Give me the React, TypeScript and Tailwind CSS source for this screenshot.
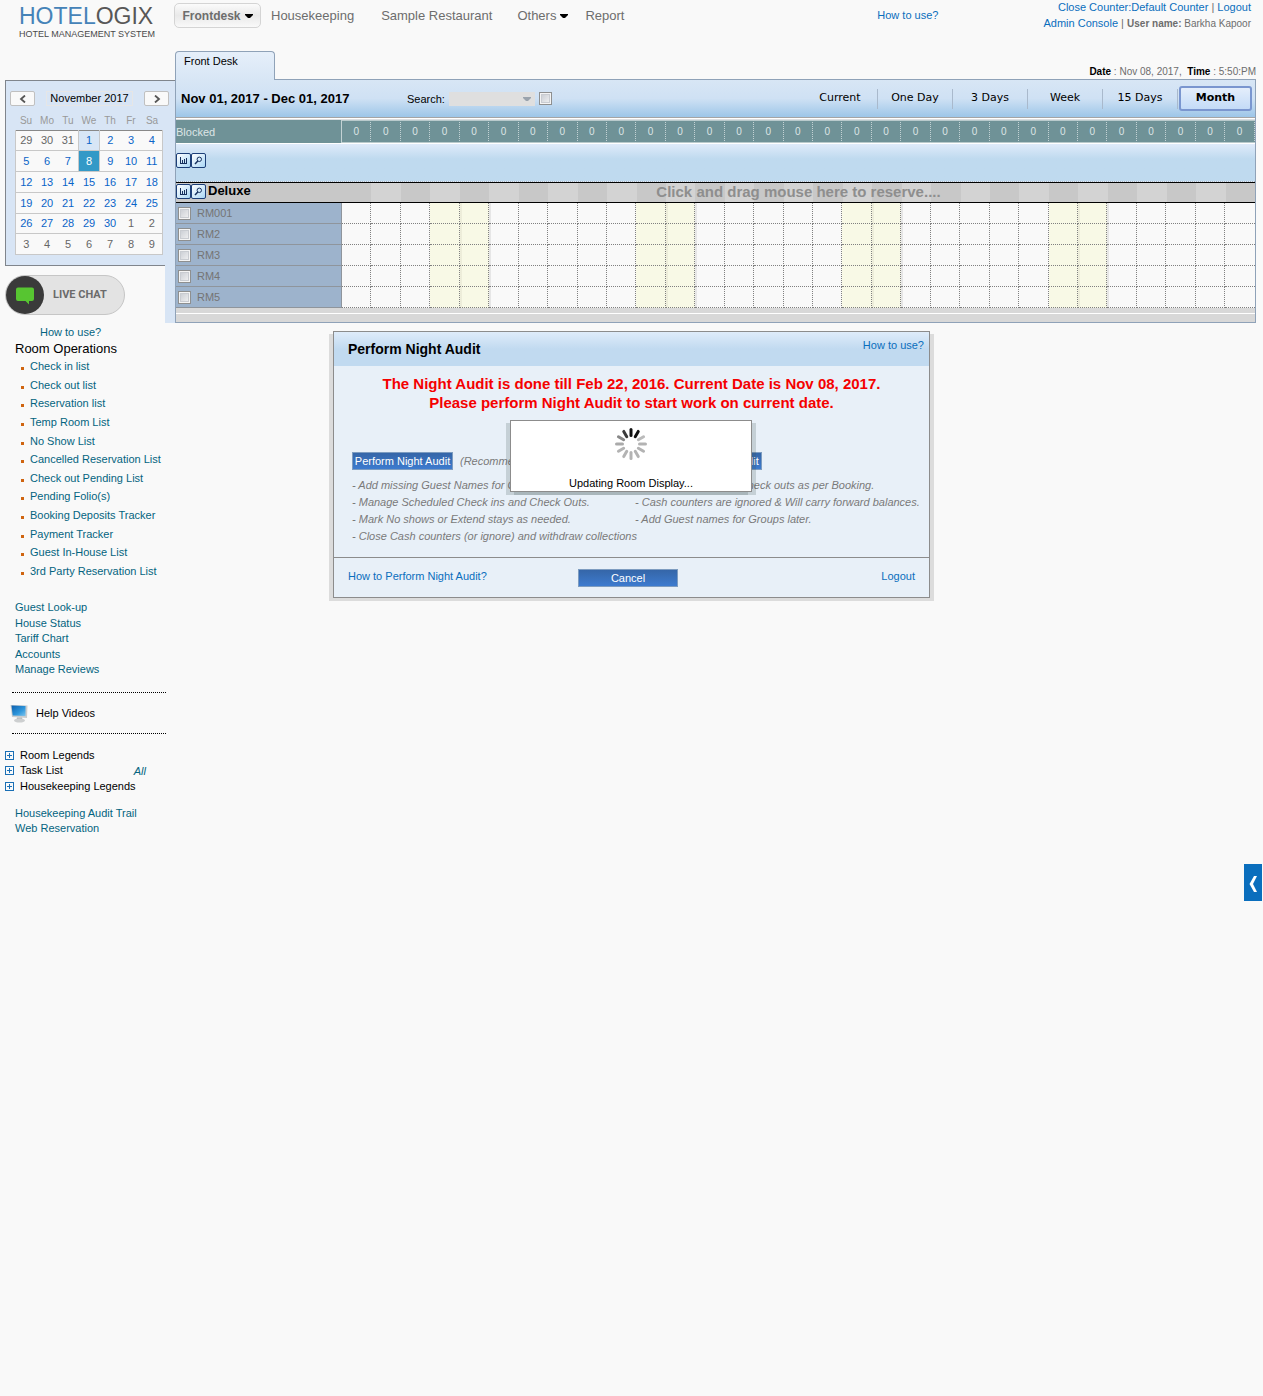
import React from "react";

const days = Array.from({ length: 31 }, (_, i) => i);
const isWeekend = (i: number) => i % 7 === 3 || i % 7 === 4;

const roomOps = [
  "Check in list",
  "Check out list",
  "Reservation list",
  "Temp Room List",
  "No Show List",
  "Cancelled Reservation List",
  "Check out Pending List",
  "Pending Folio(s)",
  "Booking Deposits Tracker",
  "Payment Tracker",
  "Guest In-House List",
  "3rd Party Reservation List",
];
const shortcuts = ["Guest Look-up", "House Status", "Tariff Chart", "Accounts", "Manage Reviews"];
const rooms = ["RM001", "RM2", "RM3", "RM4", "RM5"];
const views = ["Current", "One Day", "3 Days", "Week", "15 Days"];
const weeks = [
  [29, 30, 31, 1, 2, 3, 4],
  [5, 6, 7, 8, 9, 10, 11],
  [12, 13, 14, 15, 16, 17, 18],
  [19, 20, 21, 22, 23, 24, 25],
  [26, 27, 28, 29, 30, 1, 2],
  [3, 4, 5, 6, 7, 8, 9],
];

function Caret({ className }: { className: string }) {
  return (
    <svg viewBox="0 0 8 4" className={className} aria-hidden="true">
      <path d="M0 0h8v1L5 4H3L0 1z" fill="currentColor" />
    </svg>
  );
}

function Check({ label }: { label: string }) {
  return (
    <input
      type="checkbox"
      aria-label={label}
      className="block size-[13px] shrink-0 appearance-none border border-[#8e8f8f] bg-linear-to-br from-[#c4c8cf] to-[#f6f6f6] shadow-[inset_0_0_0_1px_#f4f4f4,inset_0_0_0_2px_#c9ccd1]"
    />
  );
}

function IconButtons() {
  return (
    <span className="flex">
      <button type="button" aria-label="Chart" className="grid size-[15px] place-items-center rounded-xs border border-[#1d3f78] bg-linear-to-br from-white to-[#a9d6f5]">
        <svg viewBox="0 0 9 9" className="size-[9px]" fill="none" stroke="#16305e" shapeRendering="crispEdges">
          <path d="M1.5 1v6.500H8M3.500 4v3M5.500 3v4M7.500 2v5" />
        </svg>
      </button>
      <button type="button" aria-label="Find" className="grid size-[15px] place-items-center rounded-xs border border-[#1d3f78] bg-linear-to-br from-white to-[#a9d6f5]">
        <svg viewBox="0 0 9 9" className="size-[9px]" fill="none" stroke="#16305e">
          <circle cx="5.3" cy="3.3" r="2.2" />
          <path d="M3.8 5 1 8" strokeWidth="1.5" />
        </svg>
      </button>
    </span>
  );
}

function Header() {
  return (
    <header className="flex h-[51px] items-start">
      <div className="w-[174px] shrink-0 pt-[4px] pl-[19px]">
        <div className="text-[23px] leading-[24px] text-[#575757]">
          <span className="text-[#4583b8]">HOTEL</span>OGIX
        </div>
        <div className="text-[9px] leading-[12px] whitespace-nowrap text-[#4a4a4a]">HOTEL MANAGEMENT SYSTEM</div>
      </div>
      <nav className="flex items-center pt-[3px] text-[13px] text-[#6d6d6d]">
        <button type="button" className="flex h-[25px] w-[87px] items-center justify-center gap-[4px] rounded-[5px] border border-[#d4d4d4] bg-linear-to-b from-[#fbfbfb] via-[#e9e9e9] to-[#f9f9f9] text-[12px] font-bold">
          Frontdesk
          <Caret className="h-[4px] w-[8px] text-black" />
        </button>
        <a href="#housekeeping" className="ml-[10px]">Housekeeping</a>
        <a href="#restaurant" className="ml-[27px]">Sample Restaurant</a>
        <button type="button" className="ml-[25px] flex items-center gap-[4px]">
          Others
          <Caret className="h-[4px] w-[8px] text-black" />
        </button>
        <a href="#report" className="ml-[17px]">Report</a>
      </nav>
      <a href="#help" className="mt-[8px] ml-auto leading-[15px] text-[#0a6ebd]">How to use?</a>
      <div className="mr-[12px] ml-[105px] flex flex-col gap-px text-right leading-[15px] text-[#6d6d6d]">
        <div>
          <a href="#close" className="text-[#0a6ebd]">Close Counter:Default Counter</a> |{" "}
          <a href="#logout" className="text-[#0a6ebd]">Logout</a>
        </div>
        <div>
          <a href="#admin" className="text-[#0a6ebd]">Admin Console</a> |{" "}
          <span className="text-[10px]"><b>User name:</b> Barkha Kapoor</span>
        </div>
      </div>
    </header>
  );
}

function dayClass(w: number, d: number) {
  if ((w === 0 && d > 7) || (w > 3 && d < 10)) return "text-[#666]";
  if (w === 1 && d === 8) return "bg-[#3399c7] text-white border-x border-[#c8c8c8]";
  if (w === 0 && d === 1) return "bg-[#d8e6f6] text-[#0a64c8] border-x border-[#c8c8c8]";
  return "text-[#0a64c8]";
}

function Calendar() {
  return (
    <section aria-label="Calendar" className="ml-[5px] h-[186px] border-y border-l border-[#80858c] bg-[#d8e5f5] pt-[10px]">
      <div className="relative z-10 ml-[4px] flex w-[159px] items-center justify-between">
        <button type="button" aria-label="Previous month" className="grid h-[15px] w-[25px] place-items-center rounded-xs border border-[#c0c0c0] bg-[#f9f9f9]">
          <svg viewBox="0 0 8 8" className="size-[8px]" fill="none" stroke="#555" strokeWidth="1.8"><path d="M6 0.5 2 4l4 3.5" /></svg>
        </button>
        <span className="border border-[#e6e6e6] px-[3px] leading-[13px] whitespace-nowrap text-black">November 2017</span>
        <button type="button" aria-label="Next month" className="grid h-[15px] w-[25px] place-items-center rounded-xs border border-[#c0c0c0] bg-[#f9f9f9]">
          <svg viewBox="0 0 8 8" className="size-[8px]" fill="none" stroke="#555" strokeWidth="1.8"><path d="m2 .5 4 3.5-4 3.5" /></svg>
        </button>
      </div>
      <table className="mt-[4px] ml-[9px] h-[145px] w-[148px] table-fixed border-collapse text-center">
        <thead>
          <tr className="h-[20px] text-[#999]">
            {["Su", "Mo", "Tu", "We", "Th", "Fr", "Sa"].map((d) => (
              <th key={d} className="p-0 pt-[2px] text-[10px] font-normal">{d}</th>
            ))}
          </tr>
        </thead>
        <tbody className="border border-[#c8c8c8] border-t-[#888] bg-[#f9f9f9]">
          {weeks.map((week, w) => (
            <tr key={w} className="border-b border-[#c8c8c8]">
              {week.map((d, i) => (
                <td key={i} className={`p-0 leading-[14px] ${dayClass(w, d)}`}>{d}</td>
              ))}
            </tr>
          ))}
        </tbody>
      </table>
    </section>
  );
}

function PlusBox() {
  return (
    <svg viewBox="0 0 9 9" className="size-[9px] shrink-0" fill="none" stroke="#1a6fb5" shapeRendering="crispEdges">
      <path d="M.5 .5h8v8h-8zM2 4.5h5M4.5 2v5" />
    </svg>
  );
}

function Sidebar() {
  return (
    <aside className="w-[165px] shrink-0 pt-[29px]">
      <Calendar />
      <button type="button" className="mt-[9px] ml-[5px] flex h-[40px] w-[120px] items-center rounded-full border border-[#c6c6c6] bg-[#e3e3e3] font-[Roboto,sans-serif] text-[11px] font-bold text-[#6b6b6b]">
        <span className="grid size-[38px] shrink-0 place-items-center rounded-full bg-[#3a3a3a]">
          <svg viewBox="0 0 20 20" className="size-[20px]" aria-hidden="true">
            <path d="M3 2.500h14a2 2 0 0 1 2 2v9.500a2 2 0 0 1-2 2h-3v3.500L10.500 16H3a2 2 0 0 1-2-2v-9.500a2 2 0 0 1 2-2z" fill="#57c531" />
          </svg>
        </span>
        <span className="ml-[9px]">LIVE CHAT</span>
      </button>

      <a href="#help" className="mt-[10px] ml-[40px] block leading-[15px] text-[#04647f]">How to use?</a>
      <h2 className="ml-[15px] text-[13px] leading-[17px] text-black">Room Operations</h2>
      <ul className="ml-[21px] grid h-[223px] text-[#04647f]">
        {roomOps.map((t) => (
          <li key={t} className="flex items-center gap-[6px] whitespace-nowrap">
            <span className="mt-[5px] size-[3px] shrink-0 bg-[#cf6410]" />
            <a href="#list">{t}</a>
          </li>
        ))}
      </ul>
      <ul className="mt-[20px] ml-[15px] grid h-[78px] text-[#04647f]">
        {shortcuts.map((t) => (
          <li key={t} className="leading-[15px]"><a href="#go">{t}</a></li>
        ))}
      </ul>
      <div className="mt-[14px] ml-[12px] flex h-[42px] w-[154px] items-center border-y border-dotted border-black">
        <svg viewBox="0 0 18 19" className="-ml-[2px] h-[19px] w-[18px]" aria-hidden="true">
          <defs>
            <linearGradient id="screen" x1="0" y1="0" x2="1" y2="1">
              <stop offset="0" stopColor="#0c5fae" />
              <stop offset="0.6" stopColor="#2f97dc" />
              <stop offset="1" stopColor="#7cc4ee" />
            </linearGradient>
          </defs>
          <path d="M0.500 1 17.500 1.500 17 14 2 13z" fill="#c9ccce" />
          <path d="M1.500 1.500 15.500 2 15.500 12 2.700 11.500z" fill="url(#screen)" />
          <path d="M7 13.500h5l.5 2.500h-6z" fill="#b3b6b8" />
          <ellipse cx="9.500" cy="16.500" rx="5.500" ry="2" fill="#cdcfd0" />
        </svg>
        <a href="#videos" className="ml-[8px] text-black">Help Videos</a>
      </div>
      <div className="mt-[14px] ml-[5px] grid h-[46px] text-black">
        <button type="button" className="flex items-center gap-[6px] leading-[15px]"><PlusBox />Room Legends</button>
        <div className="flex items-center">
          <button type="button" className="flex items-center gap-[6px] leading-[15px]"><PlusBox />Task List</button>
          <a href="#all" className="mr-[19px] ml-auto text-[#04647f] italic">All</a>
        </div>
        <button type="button" className="flex items-center gap-[6px] leading-[15px] whitespace-nowrap"><PlusBox />Housekeeping Legends</button>
      </div>
      <div className="mt-[12px] ml-[15px] flex flex-col leading-[15px] text-[#04647f]">
        <a href="#trail">Housekeeping Audit Trail</a>
        <a href="#web">Web Reservation</a>
      </div>
    </aside>
  );
}

function Toolbar() {
  return (
    <div className="flex h-[38px] items-center border-b border-[#a5a5a5] bg-linear-to-b from-[#d8e6f5] via-[#cfe1f4] to-[#9dc6e8] text-black">
      <h1 className="ml-[5px] w-[226px] pt-px text-[13px] font-bold whitespace-nowrap">Nov 01, 2017 - Dec 01, 2017</h1>
      <label htmlFor="search">Search:</label>
      <div className="relative mx-[4px]">
        <select id="search" disabled className="block h-[14px] w-[86px] appearance-none bg-[#dfdfdf]" />
        <Caret className="pointer-events-none absolute top-[5px] right-[4px] h-[4px] w-[8px] text-[#9aa3ad]" />
      </div>
      <Check label="Search option" />
      <div className="mr-[3px] ml-auto flex items-center font-['DejaVu_Sans',sans-serif] text-[11px]">
        {views.map((v) => (
          <button key={v} type="button" className="h-[20px] w-[75px] border-r border-[#a9b9cc] pb-px">{v}</button>
        ))}
        <button type="button" className="ml-px h-[25px] w-[73px] rounded-[3px] border-2 border-[#7a96cf] bg-linear-to-b from-[#e4eefb] to-[#c4dbf7] pb-px font-bold">Month</button>
      </div>
    </div>
  );
}

function Schedule() {
  return (
    <table className="w-full table-fixed border-separate border-spacing-0">
      <colgroup>
        <col className="w-[166px]" />
        {days.map((i) => <col key={i} />)}
      </colgroup>
      <tbody>
        <tr className="h-[23px] bg-[#6f9297] text-[#dde5e6]">
          <th className="border-r border-[#c3d2d4] p-0 text-left font-normal">Blocked</th>
          {days.map((i) => (
            <td key={i} className="border-y border-r border-y-[#b9cacc] border-r-[#c3d2d4] p-0 text-center text-[10px] [border-right-style:dotted]">0</td>
          ))}
        </tr>
        <tr className="h-[39px]">
          <td colSpan={32} className="border-t border-b border-t-white border-b-[#a8b4c0] bg-linear-to-b from-[#dfebfa] via-[#bfdaef] via-40% to-[#bfdaef] p-0 pt-[9px] align-top [border-bottom-style:dotted]">
            <IconButtons />
          </td>
        </tr>
        <tr className="h-[21px]">
          <th className="border-y border-black bg-[#c8c8c8] p-0">
            <div className="flex h-[19px] items-start gap-[2px] pt-px text-[13px] leading-[14px] text-black">
              <IconButtons />Deluxe
            </div>
          </th>
          <td colSpan={31} className="border-y border-black p-0">
            <div className="relative">
              <div className="flex h-[19px]">
                {days.map((i) => (
                  <span key={i} className={i % 2 ? "flex-1 bg-[#d3d3d3]" : "flex-1 bg-[#c8c8c8]"} />
                ))}
              </div>
              <span className="absolute inset-0 text-center text-[15px] leading-[17px] font-bold text-[#8e8e8e]">
                Click and drag mouse here to reserve....
              </span>
            </div>
          </td>
        </tr>
        {rooms.map((r) => (
          <tr key={r} className="h-[21px]">
            <th className="border-r border-b border-[#8f959c] bg-[#9db3cc] p-0 font-normal text-[#757575]">
              <span className="flex items-center gap-[6px] pl-[2px]"><Check label={r} />{r}</span>
            </th>
            {days.map((i) => (
              <td
                key={i}
                className={
                  "border-r border-b border-dotted border-[#808080] p-0 last:border-r-0 " +
                  (isWeekend(i)
                    ? i % 7 === 4
                      ? "bg-[#f8f9e6] shadow-[inset_2px_0_0_#ededda]"
                      : "bg-[#f8f9e6]"
                    : i % 7 === 5
                      ? "shadow-[inset_2px_0_0_#e6e6e6]"
                      : "")
                }
              />
            ))}
          </tr>
        ))}
      </tbody>
    </table>
  );
}

function Spinner() {
  const shades = ["#111", "#111", "#bbb", "#b3b3b3", "#b3b3b3", "#b3b3b3", "#b3b3b3", "#b3b3b3", "#b3b3b3", "#aaa", "#888", "#3a3a3a"];
  return (
    <svg viewBox="0 0 32 32" className="size-[32px]" aria-hidden="true">
      {shades.map((c, i) => (
        <line key={i} x1="16" y1="1.5" x2="16" y2="7.500" stroke={c} strokeWidth="3" strokeLinecap="round" transform={`rotate(${i * 30} 16 16)`} />
      ))}
    </svg>
  );
}

const actionButton = "border border-[#7d9cc0] bg-linear-to-b from-[#3566a8] to-[#3d7bcf] leading-[16px] text-white";

function AuditDialog() {
  return (
    <div role="dialog" aria-label="Perform Night Audit" className="relative w-[597px] border border-[#8c8c8c] bg-[#e8f0f8] shadow-[4px_3px_0_#dcdcdc,-4px_3px_0_#dcdcdc]">
      <div className="flex h-[34px] items-start justify-between bg-linear-to-b from-[#dfecfa] via-[#c1daf0] via-50% to-[#c1daf0] pr-[5px] pl-[14px]">
        <h2 className="pt-[8px] text-[14px] leading-[18px] font-bold text-black">Perform Night Audit</h2>
        <a href="#help" className="pt-[6px] leading-[15px] text-[#0a6ebd]">How to use?</a>
      </div>
      <p className="pt-[8px] text-center text-[15px] leading-[19px] font-bold text-[#f50000]">
        The Night Audit is done till Feb 22, 2016. Current Date is Nov 08, 2017.
        <br />
        Please perform Night Audit to start work on current date.
      </p>
      <div className="mt-[40px] flex px-[18px] leading-[17px] whitespace-nowrap text-[#7a7a7a] italic">
        <div className="w-[283px]">
          <div className="mb-[7px] flex items-center gap-[7px]">
            <button type="button" className={`${actionButton} w-[101px] not-italic`}>Perform Night Audit</button>
            (Recommended)
          </div>
          <p>- Add missing Guest Names for Groups.</p>
          <p>- Manage Scheduled Check ins and Check Outs.</p>
          <p>- Mark No shows or Extend stays as needed.</p>
          <p>- Close Cash counters (or ignore) and withdraw collections</p>
        </div>
        <div>
          <div className="mb-[7px]">
            <button type="button" className={`${actionButton} w-[127px] not-italic`}>Perform Auto Night Audit</button>
          </div>
          <p>- Auto Check ins and Check outs as per Booking.</p>
          <p>- Cash counters are ignored &amp; Will carry forward balances.</p>
          <p>- Add Guest names for Groups later.</p>
        </div>
      </div>
      <div className="mt-[12px] flex h-[40px] items-start border-t border-[#8c8c8c] px-[14px] pt-[11px]">
        <a href="#how" className="w-[230px] text-[#0a6ebd]">How to Perform Night Audit?</a>
        <button type="button" className={`${actionButton} w-[100px]`}>Cancel</button>
        <a href="#logout" className="ml-auto text-[#0a6ebd]">Logout</a>
      </div>
      <div role="status" className="absolute top-[88px] left-[176px] flex h-[72px] w-[242px] flex-col items-center justify-between border border-[#8c8c8c] bg-white pt-[7px] text-black shadow-[4px_3px_0_rgba(60,80,80,0.2),-4px_3px_0_rgba(60,80,80,0.2)]">
        <Spinner />
        <span className="leading-[15px]">Updating Room Display...</span>
      </div>
    </div>
  );
}

export default function App() {
  return (
    <div className="relative min-h-screen bg-[#f9f9f9] font-['Liberation_Sans',Arial,sans-serif] text-[11px] leading-[14px]">
      <Header />
      <div className="flex items-start">
        <Sidebar />
        <div className="flex min-w-0 flex-1">
          <div className="mt-[29px] w-[10px] shrink-0 border-t border-[#80858c] bg-[#d8e5f5]" />
          <main className="mr-[7px] min-w-0 flex-1">
            <div className="flex h-[28px] items-end justify-between">
              <div className="relative z-10 -mb-px h-[29px] w-[100px] rounded-t-[4px] border border-b-0 border-[#8fa2b8] bg-linear-to-b from-[#e6effa] to-[#d8e6f5] pt-[2px] pl-[8px] text-black">Front Desk</div>
              <div className="text-[10px] text-[#6d6d6d]">
                <b className="text-black">Date</b> : Nov 08, 2017, &nbsp;<b className="text-black">Time</b> : 5:50:PM
              </div>
            </div>
            <div className="border border-[#8fa2b8]">
              <Toolbar />
              <div className="h-[2px] border-t border-white bg-[#dcdfe2]" />
              <Schedule />
              <div className="h-[6px] border-b border-white bg-[#d8d8d8]" />
              <div className="h-[8px] bg-[#d8d8d8]" />
            </div>
          </main>
        </div>
      </div>
      <div className="absolute inset-x-0 top-[331px] flex justify-center">
        <AuditDialog />
      </div>
      <button type="button" aria-label="Open panel" className="fixed top-[864px] right-px grid h-[37px] w-[18px] place-items-center bg-[#0a6ebd]">
        <svg viewBox="0 0 8 16" className="mt-[3px] h-[16px] w-[8px]" aria-hidden="true">
          <path d="M5 0h3L4 8l4 8H5L0.500 8z" fill="#fff" />
        </svg>
      </button>
    </div>
  );
}
